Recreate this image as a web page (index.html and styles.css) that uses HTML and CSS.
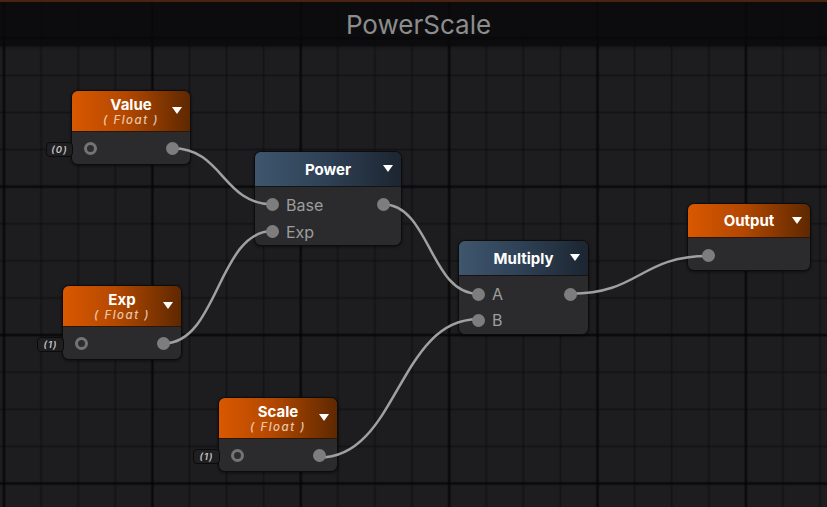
FILE: index.html
```html
<!DOCTYPE html>
<html lang="en">
<head>
<meta charset="utf-8">
<title>PowerScale</title>
<link rel="stylesheet" href="styles.css">
</head>
<body>
<div class="editor">
  <div class="titlebar"><span class="title">PowerScale</span></div>

  <svg class="wires" width="827" height="507" viewBox="0 0 827 507">
    <path d="M172.7 148.3 C222.7 148.3, 222.7 204.3, 272.7 204.3"/>
    <path d="M164 343.3 C218 343.3, 218 231, 272.7 231"/>
    <path d="M382.7 204.3 C430 204.3, 430 293.7, 477.7 293.7"/>
    <path d="M319 457.7 C398 457.7, 398 319.3, 477.7 319.3"/>
    <path d="M570.7 293.7 C640 293.7, 640 256, 708.3 256"/>
  </svg>

  <div class="node float n-value">
    <div class="head orange">
      <div class="name">Value</div>
      <div class="type">( Float )</div>
      <span class="caret"></span>
    </div>
    <div class="body">
      <div class="row"><span class="port ring"></span><span class="port"></span></div>
    </div>
    <div class="default">(0)</div>
  </div>

  <div class="node float n-exp">
    <div class="head orange">
      <div class="name">Exp</div>
      <div class="type">( Float )</div>
      <span class="caret"></span>
    </div>
    <div class="body">
      <div class="row"><span class="port ring"></span><span class="port"></span></div>
    </div>
    <div class="default">(1)</div>
  </div>

  <div class="node float n-scale">
    <div class="head orange">
      <div class="name">Scale</div>
      <div class="type">( Float )</div>
      <span class="caret"></span>
    </div>
    <div class="body">
      <div class="row"><span class="port ring"></span><span class="port"></span></div>
    </div>
    <div class="default">(1)</div>
  </div>

  <div class="node op n-power">
    <div class="head blue">
      <div class="name">Power</div>
      <span class="caret"></span>
    </div>
    <div class="body">
      <div class="row"><span class="in"><span class="port"></span><span class="label">Base</span></span><span class="port"></span></div>
      <div class="row"><span class="in"><span class="port"></span><span class="label">Exp</span></span></div>
    </div>
  </div>

  <div class="node op n-multiply">
    <div class="head blue">
      <div class="name">Multiply</div>
      <span class="caret"></span>
    </div>
    <div class="body">
      <div class="row"><span class="in"><span class="port"></span><span class="label">A</span></span><span class="port"></span></div>
      <div class="row"><span class="in"><span class="port"></span><span class="label">B</span></span></div>
    </div>
  </div>

  <div class="node out n-output">
    <div class="head orange">
      <div class="name">Output</div>
      <span class="caret"></span>
    </div>
    <div class="body">
      <div class="row"><span class="port"></span></div>
    </div>
  </div>
</div>
</body>
</html>
```

FILE: styles.css
```css
* { box-sizing: border-box; }

html, body {
  margin: 0;
  width: 827px;
  height: 507px;
  overflow: hidden;
  background: #1d1d20;
}

.editor {
  position: relative;
  width: 827px;
  height: 507px;
  overflow: hidden;
  font-family: Inter, "Noto Sans", sans-serif;
  background-color: #1d1d20;
  background-image:
    linear-gradient(90deg, transparent 0, rgba(4,4,5,.45) 1px, rgba(4,4,5,.8) 2px, rgba(4,4,5,.45) 3px, transparent 4px, transparent 100%),
    linear-gradient(180deg, transparent 0, rgba(4,4,5,.45) 1px, rgba(4,4,5,.8) 2px, rgba(4,4,5,.45) 3px, transparent 4px, transparent 100%),
    linear-gradient(90deg, transparent 0, rgba(8,8,10,.35) 1px, rgba(8,8,10,.45) 1.5px, rgba(8,8,10,.35) 2px, transparent 3px, transparent 100%),
    linear-gradient(180deg, transparent 0, rgba(8,8,10,.35) 1px, rgba(8,8,10,.45) 1.5px, rgba(8,8,10,.35) 2px, transparent 3px, transparent 100%);
  background-size: 148.4px 100%, 100% 148.4px, 37.1px 100%, 100% 37.1px;
  background-position: 2px 0, 0 36.3px, 2.5px 0, 0 -0.3px;
}

.titlebar {
  height: 46px;
  border-top: 2px solid #4a2410;
  background: rgba(9, 9, 10, .8);
  box-shadow: 0 1px 3px rgba(0,0,0,.45);
  display: flex;
  align-items: center;
  justify-content: center;
  padding-left: 10px;
}

.title {
  color: #8d8d8d;
  font-size: 26px;
  font-weight: 400;
}

.wires {
  position: absolute;
  left: 0;
  top: 0;
  z-index: 1;
  pointer-events: none;
}

.wires path {
  fill: none;
  stroke: #a0a0a0;
  stroke-width: 2.5;
}

/* nodes */
.node {
  position: absolute;
  display: flex;
  flex-direction: column;
  border: 1px solid #0c0c0d;
  border-radius: 7px;
  background: #2b2b2e;
  box-shadow: 0 1px 3px rgba(0,0,0,.5);
}

.n-value    { left: 71px;  top: 90px;  width: 120px; height: 75px; }
.n-exp      { left: 62px;  top: 285px; width: 120px; height: 75px; }
.n-scale    { left: 218px; top: 397px; width: 120px; height: 75px; }
.n-power    { left: 254px; top: 151px; width: 148px; height: 95px; }
.n-multiply { left: 458px; top: 240px; width: 131px; height: 95px; }
.n-output   { left: 687px; top: 203px; width: 124px; height: 68px; }

.head {
  position: relative;
  display: flex;
  flex-direction: column;
  align-items: center;
  justify-content: center;
  border-radius: 6px 6px 0 0;
  color: #fff;
  border-bottom: 1px solid #141414;
}

.float .head { height: 41px; justify-content: flex-start; padding-top: 5px; }
.op .head    { height: 35px; }
.out .head   { height: 34px; }

.orange {
  background: linear-gradient(90deg, #d95800 0%, #b34800 45%, #5e2800 100%);
  border-bottom-color: #2e1505;
}

.blue {
  background: linear-gradient(90deg, #3e566e 0%, #2e4054 50%, #1c2531 100%);
}

.name {
  font-size: 15px;
  font-weight: 700;
  line-height: 17px;
}

.type {
  font-size: 11.5px;
  font-style: italic;
  font-weight: 500;
  line-height: 14px;
  letter-spacing: 1.5px;
  color: rgba(255, 228, 212, .82);
}

.caret {
  position: absolute;
  right: 8px;
  top: 50%;
  margin-top: -4px;
  width: 0;
  height: 0;
  border-left: 5.5px solid transparent;
  border-right: 5.5px solid transparent;
  border-top: 7px solid #fff;
}

.body {
  flex: 1;
  display: flex;
  flex-direction: column;
}

.float .body { padding: 0 11px 0 12px; justify-content: center; }
.op .body    { padding: 4px 11px 0 11px; }
.n-multiply .body { padding-top: 5px; padding-left: 13px; }
.out .body   { padding: 3px 11px 0 14px; }

.row {
  display: flex;
  align-items: center;
  justify-content: space-between;
  height: 27px;
}

.n-multiply .row { height: 26px; }
.out .row { height: 29px; }

.in {
  display: flex;
  align-items: center;
}

.port {
  position: relative;
  z-index: 2;
  width: 13px;
  height: 13px;
  border-radius: 50%;
  background: #7d7d7d;
  flex: none;
}

.port.ring {
  background: #2d2d30;
  border: 3px solid #747474;
}

.label {
  margin-left: 7px;
  font-size: 16px;
  color: #9d9d9d;
  line-height: 20px;
}

.default {
  position: absolute;
  right: 100%;
  top: 51px;
  width: 27px;
  height: 15px;
  margin-right: -1px;
  border: 1px solid #0b0b0c;
  border-radius: 4px;
  background: #1f1f22;
  color: #c4c4c4;
  font-size: 9.5px;
  font-style: italic;
  font-weight: 600;
  letter-spacing: 1px;
  line-height: 13px;
  text-align: center;
}
```
